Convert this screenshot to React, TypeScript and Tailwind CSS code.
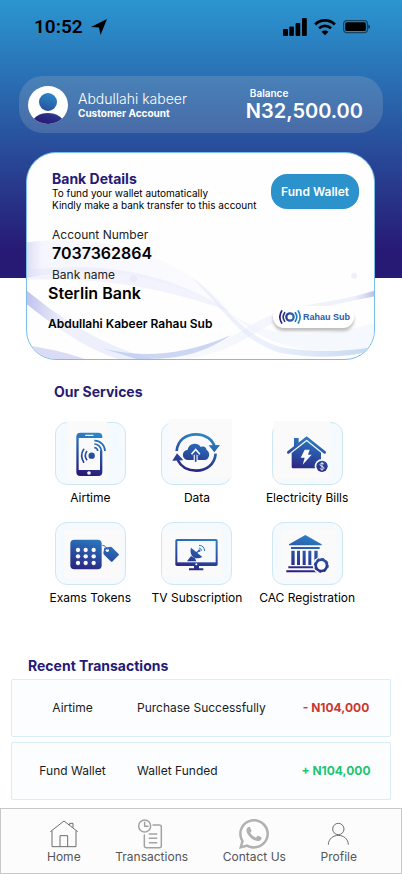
import type { ReactNode } from "react"
import { FaWhatsapp } from "react-icons/fa"

const transactions = [
  { name: "Airtime", status: "Purchase Successfully", amount: "- N104,000", credit: false },
  { name: "Fund Wallet", status: "Wallet Funded", amount: "+ N104,000", credit: true },
]

function StatusBar() {
  return (
    <div className="flex items-center justify-between pl-[34px] pr-8 pt-[15px] text-black">
      <div className="flex items-center gap-2">
        <span className="font-['Roboto',sans-serif] text-[19px] leading-6 font-semibold">10:52</span>
        <svg className="w-4 h-4" viewBox="0 0 16 16" fill="currentColor">
          <path d="M16 0 L9.5 16 L8 8.5 L0 8 Z" />
        </svg>
      </div>
      <div className="flex items-center gap-[7px]">
        <svg className="w-6 h-[18px]" viewBox="0 0 24 18" fill="currentColor">
          <rect x="0" y="11" width="5" height="7" rx="1" />
          <rect x="6.3" y="8.5" width="4.6" height="9.5" rx="1" />
          <rect x="12.6" y="5" width="4.6" height="13" rx="1" />
          <rect x="19" y="0" width="4.8" height="18" rx="1" />
        </svg>
        <svg className="w-[22px] h-[18px]" viewBox="0 0 22 18" fill="none" stroke="currentColor" strokeWidth="2.8">
          <path d="M1.2 6.4 C6.5 1 15.5 1 20.8 6.4" />
          <path d="M5 10.3 C8.5 7 13.5 7 17 10.3" />
          <path d="M11 17.2 L7.5 13.7 C9.5 12 12.5 12 14.5 13.7 Z" fill="currentColor" stroke="none" />
        </svg>
        <svg className="w-[27px] h-[14px]" viewBox="0 0 27 14">
          <rect x="0.6" y="0.6" width="23.8" height="12" rx="3" fill="none" stroke="#16425f" strokeWidth="1.2" />
          <rect x="2.2" y="2.2" width="20.6" height="8.8" rx="1.5" fill="black" />
          <path d="M25.3 4.5 Q27 5 27 6.7 Q27 8.5 25.3 9 Z" fill="#0c2f47" />
        </svg>
      </div>
    </div>
  )
}

function ProfileBar() {
  return (
    <div className="mx-[19px] mt-[37px] flex h-[57px] items-center justify-between rounded-[24px] bg-[#c8c8c8]/20 pl-[9px] pr-[20px] text-white">
      <div className="flex items-center gap-[10px]">
        <svg className="w-10 h-[38px]" viewBox="0 0 120 114">
          <defs>
            <linearGradient id="avatar" gradientUnits="userSpaceOnUse" x1="80" y1="20" x2="50" y2="114">
              <stop offset="0" stopColor="#2b8ccb" />
              <stop offset="0.6" stopColor="#28539f" />
              <stop offset="0.7" stopColor="#2a2f88" />
              <stop offset="1" stopColor="#2a1a76" />
            </linearGradient>
            <clipPath id="avatarClip">
              <ellipse cx="60" cy="57" rx="60" ry="57" />
            </clipPath>
          </defs>
          <g clipPath="url(#avatarClip)">
            <rect width="120" height="114" fill="white" />
            <ellipse cx="60" cy="48" rx="27" ry="27" fill="url(#avatar)" />
            <ellipse cx="60" cy="114" rx="48" ry="33" fill="url(#avatar)" />
          </g>
        </svg>
        <div>
          <p className="text-[14px] leading-4 font-light">Abdullahi kabeer</p>
          <p className="text-[10px] leading-3 font-bold">Customer Account</p>
        </div>
      </div>
      <div>
        <p className="pl-1 text-[10px] leading-3 font-semibold">Balance</p>
        <p className="text-[20px] leading-6 font-semibold">N32,500.00</p>
      </div>
    </div>
  )
}

function CardWaves() {
  return (
    <svg className="absolute inset-0 h-full w-full" viewBox="0 0 349 208" preserveAspectRatio="none">
      <defs>
        <linearGradient id="leftBand" x1="0" x2="1">
          <stop offset="0" stopColor="#b9bdec" stopOpacity="0.5" />
          <stop offset="0.08" stopColor="#d3d6f5" stopOpacity="0.2" />
          <stop offset="1" stopColor="#e4e6fa" stopOpacity="0.1" />
        </linearGradient>
        <linearGradient id="rightBand" x1="0" x2="1">
          <stop offset="0" stopColor="#e6e9fa" stopOpacity="0.2" />
          <stop offset="0.9" stopColor="#dde4f8" stopOpacity="0.5" />
          <stop offset="1" stopColor="#a9b4e2" stopOpacity="0.8" />
        </linearGradient>
        <linearGradient id="sweep" x1="0" x2="1">
          <stop offset="0" stopColor="#a4a8e6" stopOpacity="0.7" />
          <stop offset="0.3" stopColor="#dfe2f8" stopOpacity="0.5" />
          <stop offset="1" stopColor="#dbe6f9" stopOpacity="0.6" />
        </linearGradient>
        <linearGradient id="ribbon" x1="0" x2="1">
          <stop offset="0" stopColor="#e2e3f8" stopOpacity="0.5" />
          <stop offset="0.4" stopColor="#dfe8f9" stopOpacity="0.6" />
          <stop offset="1" stopColor="#b5cdee" stopOpacity="0.8" />
        </linearGradient>
      </defs>
      <path d="M0 90 C70 82 120 96 165 125 C185 138 198 150 204 160 C150 128 80 110 0 126 Z" fill="url(#leftBand)" />
      <path d="M0 118 C60 112 130 112 204 160 C150 140 80 124 0 128 Z" fill="#dcdff7" opacity="0.35" />
      <path d="M0 139 C40 172 80 196 128 208 L92 208 C55 196 30 176 0 153 Z" fill="url(#sweep)" />
      <path d="M0 194 C25 198 45 203 58 208 L10 208 Z" fill="#c9cdef" opacity="0.7" />
      <path d="M75 197 C110 206 150 207 205 184 C170 208 140 208 110 208 Z" fill="#b6c6f0" opacity="0.7" />
      <path d="M145 207 C195 200 215 175 250 162 C285 150 320 149 349 139 L349 145 C300 155 265 162 240 176 C215 190 195 204 160 208 Z" fill="url(#rightBand)" />
      <path d="M165 125 C200 150 215 187 260 197 C290 202 325 200 349 196 L349 199 C320 208 285 207 255 202 C215 190 200 160 165 125 Z" fill="url(#ribbon)" />
      <path d="M205 162 C245 190 300 185 349 172 L349 196 C300 202 250 205 205 162 Z" fill="#eef3fc" opacity="0.6" />
      <circle cx="107" cy="127" r="3.5" fill="#e9eafa" />
      <circle cx="329" cy="124" r="3" fill="#eff0fa" />
    </svg>
  )
}

function BankCard() {
  return (
    <section className="relative ml-[26px] mr-[27px] mt-[19px] overflow-hidden rounded-[30px] border border-[#79bfe8] bg-[#fefeff]">
      <CardWaves />
      <div className="relative flex items-start justify-between pl-[25px] pr-[15px] pt-[18px]">
        <div className="text-black">
          <h2 className="text-[14px] leading-4 font-bold text-[#271a75]">Bank Details</h2>
          <p className="text-[10px] leading-3">To fund your wallet automatically</p>
          <p className="text-[10px] leading-3">Kindly make a bank transfer to this account</p>
        </div>
        <button className="mt-[3px] h-[35px] shrink-0 rounded-[16px] bg-[#2b92cb] px-[10px] text-[12px] font-semibold text-white">
          Fund Wallet
        </button>
      </div>
      <dl className="relative pl-[25px] pt-4 text-black">
        <dt className="text-[12px] leading-4 text-[#222]">Account Number</dt>
        <dd className="text-[16px] leading-5 font-semibold">7037362864</dd>
        <dt className="mt-1 text-[12px] leading-4 text-[#222]">Bank name</dt>
        <dd className="-ml-1 text-[16px] leading-5 font-semibold">Sterlin Bank</dd>
      </dl>
      <div className="relative flex items-start justify-between pb-[27px] pl-[21px] pr-[20px] pt-[3px] text-black">
        <p className="pt-[10px] text-[12px] leading-4 font-semibold">Abdullahi Kabeer Rahau Sub</p>
        <div className="flex h-[22px] items-center gap-[2px] rounded-full bg-white pl-[6px] pr-1 shadow-[0_3px_3px_rgba(0,0,0,0.25)]">
          <svg className="w-[22px] h-[14px]" viewBox="0 0 66 42" fill="none" strokeLinecap="round">
            <defs>
              <linearGradient id="logo" gradientUnits="userSpaceOnUse" x1="0" y1="0" x2="66" y2="0">
                <stop offset="0" stopColor="#2a1a76" />
                <stop offset="1" stopColor="#2b92cb" />
              </linearGradient>
            </defs>
            <g stroke="url(#logo)">
              <circle cx="33" cy="21" r="11" strokeWidth="7" />
              <path d="M17 8 Q8 21 17 34 M49 8 Q58 21 49 34" strokeWidth="5" />
              <path d="M8 3 Q-3 21 8 39 M58 3 Q69 21 58 39" strokeWidth="5" />
            </g>
          </svg>
          <span className="font-['Liberation_Sans',sans-serif] text-[9px] leading-3 font-bold text-[#2d5ba8]">Rahau Sub</span>
        </div>
      </div>
    </section>
  )
}

// all service icons are drawn on the same 207 x 183 tile canvas
function Service({ label, children }: { label: string; children: ReactNode }) {
  return (
    <button className="flex flex-col items-center gap-1 text-black">
      <span className="block rounded-[12px] border border-[#cfe7f5] bg-[#f5fafe]">
        <svg className="block w-[69px] h-[61px] overflow-visible" viewBox="3 3 207 183">
          <defs>
            <linearGradient id="brand" gradientUnits="userSpaceOnUse" x1="120" y1="35" x2="90" y2="160">
              <stop offset="0" stopColor="#2b86c8" />
              <stop offset="0.5" stopColor="#2a50a2" />
              <stop offset="1" stopColor="#2b1979" />
            </linearGradient>
          </defs>
          {children}
        </svg>
      </span>
      <span className="text-[12px] leading-[18px] whitespace-nowrap">{label}</span>
    </button>
  )
}

function Services() {
  return (
    <section className="pt-6">
      <h2 className="pl-[54px] text-[14px] leading-4 font-bold text-[#271a75]">Our Services</h2>
      <div className="grid grid-cols-[106fr_106fr_113fr] gap-y-[15px] pl-[37px] pr-[38px] pt-[22px]">
        <Service label="Airtime">
          <rect x="36" y="-2" width="120" height="176" fill="#fafafa" />
          <rect x="64" y="32" width="78" height="130" rx="12" fill="url(#brand)" />
          <rect x="71" y="48" width="64" height="96" fill="#fafafa" />
          <rect x="90" y="38" width="26" height="4" rx="2" fill="#fafafa" />
          <circle cx="102" cy="153" r="5.5" fill="#fafafa" />
          <path d="M116 48 H146 V86 H116 Z" fill="#fafafa" />
          <circle cx="110" cy="101" r="9.5" fill="url(#brand)" />
          <g fill="none" stroke="url(#brand)" strokeWidth="5">
            <path d="M96 87 Q86 101 96 115" />
            <path d="M87 80 Q73 101 87 122" />
            <path d="M118 56 A31 31 0 0 1 150 87" />
            <path d="M118 66 A21 21 0 0 1 139 87" />
            <path d="M118 77 A10 10 0 0 1 128 87" />
          </g>
        </Service>
        <Service label="Data">
          <rect x="22" y="-9" width="191" height="178" fill="#fafafa" />
          <g fill="none" stroke="url(#brand)" strokeWidth="8">
            <path d="M47 87 C50 54 75 37 105 37 C134 37 155 53 161 75" />
            <path d="M164 95 C161 128 136 146 106 146 C80 146 60 134 50 114" />
          </g>
          <path d="M143 70 L177 69 L160 91 Z" fill="url(#brand)" />
          <path d="M34 116 L48 94 L67 115 Z" fill="url(#brand)" />
          <path d="M82 114 C61 114 60 85 80 83 C83 63 111 59 119 75 C131 70 137 79 137 84 C149 90 147 114 130 114 Z" fill="url(#brand)" />
          <path d="M104 119 V90 M94 99 L104 88 L114 99" fill="none" stroke="#fafafa" strokeWidth="12" />
          <path d="M104 119 V91 M95 100 L104 90 L113 100" fill="none" stroke="url(#brand)" strokeWidth="5" />
        </Service>
        <Service label="Electricity Bills">
          <rect x="6" y="-2" width="168" height="174" fill="#fafafa" />
          <path d="M66 74 V48 H80 V62 Z" fill="url(#brand)" />
          <path d="M49 91 L104 48 L158 91" fill="none" stroke="url(#brand)" strokeWidth="8" strokeLinecap="round" />
          <path d="M59 93 L104 58 L147 92 V139 H63 Q59 139 59 135 Z" fill="url(#brand)" />
          <path d="M98 83 H113 L108 98 H119 L92 128 L98 107 H86 Z" fill="#fafafa" />
          <circle cx="150" cy="133" r="22" fill="#fafafa" />
          <circle cx="150" cy="133" r="17" fill="url(#brand)" />
          <path d="M156 127 C154 122 144 123 144 128 C144 134 156 132 156 138 C156 144 145 144 144 138 M150 120 V146" fill="none" stroke="#fafafa" strokeWidth="2.5" />
        </Service>
        <Service label="Exams Tokens">
          <rect x="26" y="20" width="172" height="152" fill="#fafafa" />
          <rect x="46" y="53" width="94" height="89" rx="12" fill="url(#brand)" />
          {[84, 103, 123].map((y) =>
            [69, 92, 116].map((x) => <circle key={`${x}-${y}`} cx={x} cy={y} r="6.5" fill="#fafafa" />)
          )}
          <path d="M148 77 L167 74 Q170 74 172 77 L191 96 Q193 98 191 100 L173 118 Q170 121 167 118 L148 99 Q145 96 145 93 Z" fill="url(#brand)" />
          <circle cx="157" cy="85" r="5" fill="#fafafa" />
          <path d="M142 70 Q153 70 157 84" fill="none" stroke="#2a50a2" strokeWidth="2.5" />
        </Service>
        <Service label="TV Subscription">
          <rect x="4" y="24" width="180" height="142" fill="#fafafa" />
          <rect x="43" y="51" width="127" height="81" rx="5" fill="url(#brand)" />
          <rect x="49" y="57" width="115" height="64" fill="#f8f9fb" />
          <circle cx="106" cy="127" r="3" fill="#fafafa" />
          <path d="M99 132 H114 V139 H127 V145 H84 V139 H99 Z" fill="url(#brand)" />
          <path d="M90 77 C83 101 103 117 124 105 Z" fill="url(#brand)" />
          <path d="M78 118 L90 102 L102 109 L106 118 Z" fill="url(#brand)" />
          <path d="M105 93 L115 86" stroke="url(#brand)" strokeWidth="4" />
          <circle cx="115" cy="86" r="3.5" fill="#2a67b2" />
          <g fill="none" stroke="#2b78be" strokeWidth="3">
            <path d="M114 78 Q121 79 122 86" />
            <path d="M114 70 Q130 71 131 87" />
          </g>
        </Service>
        <Service label="CAC Registration">
          <rect x="26" y="20" width="166" height="150" fill="#fafafa" />
          <path d="M100 39 L149 67 V70 H51 V67 Z" fill="url(#brand)" />
          <path d="M57 75 H143 V81 H57 Z" fill="url(#brand)" />
          <path d="M58 86 H68 V129 H58 Z M75 86 H84 V129 H75 Z M92 86 H101 V129 H92 Z M109 86 H118 V129 H109 Z M127 86 H137 V129 H127 Z" fill="url(#brand)" />
          <path d="M49 133 H130 V139 H49 Z M43 145 H135 V151 H43 Z" fill="url(#brand)" />
          <circle cx="148" cy="130" r="26" fill="#fafafa" />
          <circle cx="148" cy="130" r="17" fill="none" stroke="url(#brand)" strokeWidth="8" />
          <circle cx="148" cy="130" r="21" fill="none" stroke="url(#brand)" strokeWidth="3" strokeDasharray="8.2 8.3" />
        </Service>
      </div>
    </section>
  )
}

function RecentTransactions() {
  return (
    <section className="pt-[51px]">
      <h2 className="pl-7 text-[14px] leading-4 font-bold text-[#271a75]">Recent Transactions</h2>
      <ul className="mx-[11px] mt-[5px] flex flex-col gap-[5px]">
        {transactions.map((t) => (
          <li
            key={t.name}
            className="grid h-[58px] grid-cols-[121px_1fr_108px] items-center rounded-[2px] border border-[#d9ecf7] bg-[#fbfdff] text-[12px] text-[#1c1c1c]"
          >
            <span className="text-center">{t.name}</span>
            <span className="pl-1">{t.status}</span>
            <span className={t.credit ? "text-center font-bold text-[#1cc56f]" : "text-center font-bold text-[#cb3730]"}>
              {t.amount}
            </span>
          </li>
        ))}
      </ul>
    </section>
  )
}

function NavItem({ label, children }: { label: string; children: ReactNode }) {
  return (
    <a href="#" className="flex flex-col items-center">
      {children}
      <span className="text-[12px] leading-4 text-[#555]">{label}</span>
    </a>
  )
}

function BottomNav() {
  return (
    <nav className="mt-2 flex justify-between border border-[#c8c8c8] bg-[#fcfcfc] pb-[8px] pl-[46px] pr-[44px] pt-[10px]">
      <NavItem label="Home">
        <svg className="w-[30px] h-[30px]" viewBox="0 0 90 90" fill="none" stroke="#6e6e6e" strokeWidth="3">
          <path d="M4 38 L45 6 L86 38" />
          <path d="M9 35 V83 H81 V35" />
          <path d="M33 83 V50 H56 V83" />
          <path d="M62 18 V13 H72 V26" />
        </svg>
      </NavItem>
      <NavItem label="Transactions">
        <svg className="w-[30px] h-[30px]" viewBox="0 0 90 90" fill="none" stroke="#a3a3a3" strokeWidth="4.5" strokeLinecap="round">
          <circle cx="23" cy="21" r="18" />
          <path d="M23 10 V22 H33" />
          <path d="M48 18 H67 Q73 18 73 24 V80 Q73 86 67 86 H29 Q22 86 22 80 V48" />
          <path d="M37 45 H59 M37 58 H59 M37 71 H59" />
        </svg>
      </NavItem>
      <NavItem label="Contact Us">
        <FaWhatsapp className="h-[30px] w-[30px] text-[#b1b1b1]" viewBox="0 32 448 448" />
      </NavItem>
      <NavItem label="Profile">
        <svg className="w-[30px] h-[30px]" viewBox="0 0 90 90" fill="none" stroke="#6e6e6e" strokeWidth="3">
          <circle cx="43" cy="30" r="17" />
          <path d="M13 77 C14 40 72 40 73 77" />
        </svg>
      </NavItem>
    </nav>
  )
}

export default function App() {
  return (
    <div className="min-h-screen bg-[linear-gradient(to_bottom,#2b96d0_0px,#271a75_250px,#271a75_278px,#ffffff_278px)] font-['Inter',sans-serif]">
      <StatusBar />
      <ProfileBar />
      <main>
        <BankCard />
        <Services />
        <RecentTransactions />
      </main>
      <BottomNav />
    </div>
  )
}
